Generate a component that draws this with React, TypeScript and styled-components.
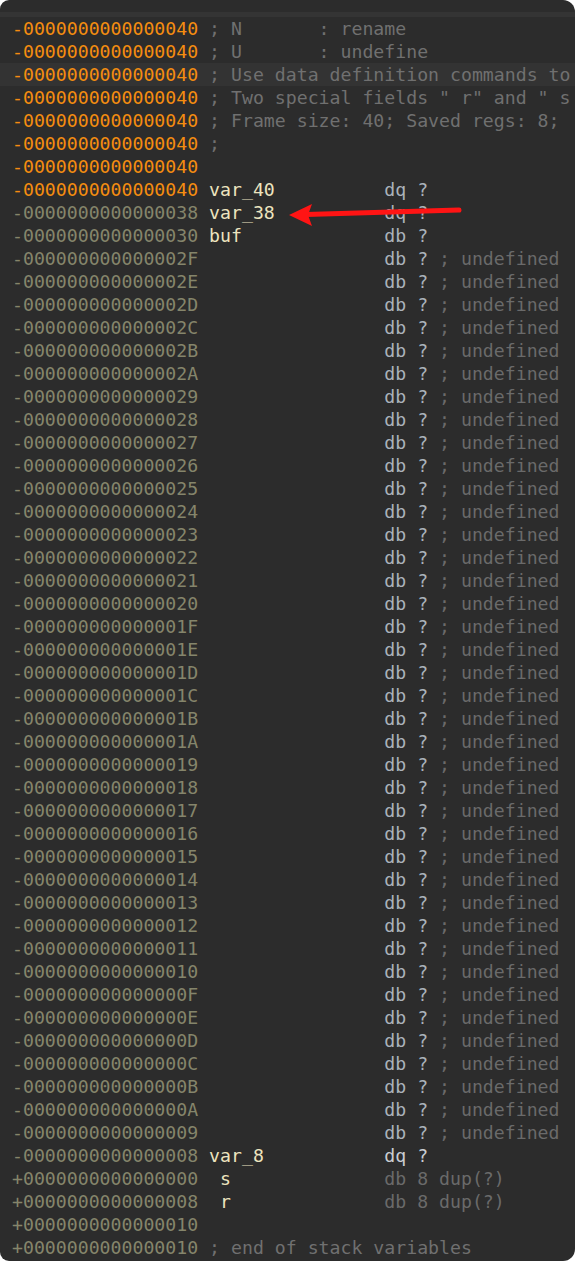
import styled, { createGlobalStyle } from "styled-components";

const GlobalStyle = createGlobalStyle`
  html, body {
    margin: 0;
    padding: 0;
    background: #ffffff;
  }
`;

const Panel = styled.div`
  position: relative;
  width: 575px;
  height: 1261px;
  box-sizing: border-box;
  padding-top: 12px;
  background: #2c2c2c;
  border-radius: 9px 12px 12px 9px;
  overflow: hidden;
  font-family: "DejaVu Sans Mono", "Liberation Mono", monospace;
  font-size: 18.2px;
`;

const TopStrip = styled.div`
  height: 5px;
  background: #343434;
`;

const Row = styled.div<{ $active?: boolean }>`
  height: 23px;
  line-height: 23px;
  padding-left: 12px;
  white-space: pre;
  background: ${({ $active }) => ($active ? "#333333" : "transparent")};
`;

type Tone = "addr" | "off" | "name" | "type" | "typeHi" | "dim" | "comment";

const tones: Record<Tone, string> = {
  addr: "#f58d10",
  off: "#85856b",
  name: "#ede4bf",
  type: "#aab2ba",
  typeHi: "#c9cdd2",
  dim: "#6a6a6a",
  comment: "#707070",
};

const Tok = styled.span<{ $tone: Tone }>`
  color: ${({ $tone }) => tones[$tone]};
`;

const Arrow = styled.svg`
  position: absolute;
  left: 0;
  top: 0;
  pointer-events: none;
`;

type Seg = [Tone, string];
type Line = { addr: string; hot?: boolean; active?: boolean; segs: Seg[] };

const pad = (s: string, n: number) => s + " ".repeat(Math.max(0, n - s.length));

// comment lines are cut where the window edge cuts them
const lines: Line[] = [
  { addr: "-0000000000000040", hot: true, segs: [["comment", "; N       : rename"]] },
  { addr: "-0000000000000040", hot: true, segs: [["comment", "; U       : undefine"]] },
  {
    addr: "-0000000000000040",
    hot: true,
    active: true,
    segs: [["comment", "; Use data definition commands to"]],
  },
  { addr: "-0000000000000040", hot: true, segs: [["comment", '; Two special fields " r" and " s']] },
  { addr: "-0000000000000040", hot: true, segs: [["comment", "; Frame size: 40; Saved regs: 8;"]] },
  { addr: "-0000000000000040", hot: true, segs: [["comment", ";"]] },
  { addr: "-0000000000000040", hot: true, segs: [] },
  { addr: "-0000000000000040", hot: true, segs: [["name", pad("var_40", 16)], ["type", "dq ?"]] },
  { addr: "-0000000000000038", segs: [["name", pad("var_38", 16)], ["type", "dq ?"]] },
  { addr: "-0000000000000030", segs: [["name", pad("buf", 16)], ["type", "db ?"]] },
];

for (let v = 0x2f; v >= 0x09; v--) {
  lines.push({
    addr: "-" + v.toString(16).toUpperCase().padStart(16, "0"),
    segs: [
      ["name", " ".repeat(16)],
      ["type", "db ? "],
      ["dim", "; undefined"],
    ],
  });
}

lines.push(
  { addr: "-0000000000000008", segs: [["name", pad("var_8", 16)], ["typeHi", "dq ?"]] },
  { addr: "+0000000000000000", segs: [["name", pad(" s", 16)], ["dim", "db 8 dup(?)"]] },
  { addr: "+0000000000000008", segs: [["name", pad(" r", 16)], ["dim", "db 8 dup(?)"]] },
  { addr: "+0000000000000010", segs: [] },
  { addr: "+0000000000000010", segs: [["comment", "; end of stack variables"]] }
);

export default function App() {
  return (
    <>
      <GlobalStyle />
      <Panel>
        <TopStrip />
        {lines.map((l, i) => (
          <Row key={i} $active={l.active}>
            <Tok $tone={l.hot ? "addr" : "off"}>{l.addr}</Tok>
            {" "}
            {l.segs.map(([tone, text], j) => (
              <Tok key={j} $tone={tone}>
                {text}
              </Tok>
            ))}
          </Row>
        ))}
        <Arrow width="575" height="1261" viewBox="0 0 575 1261">
          <line x1="306" y1="214.5" x2="459" y2="210" stroke="#ff1414" strokeWidth="5" strokeLinecap="round" />
          <polygon points="289,215 312,204 308,215 312,226" fill="#ff1414" />
        </Arrow>
      </Panel>
    </>
  );
}
